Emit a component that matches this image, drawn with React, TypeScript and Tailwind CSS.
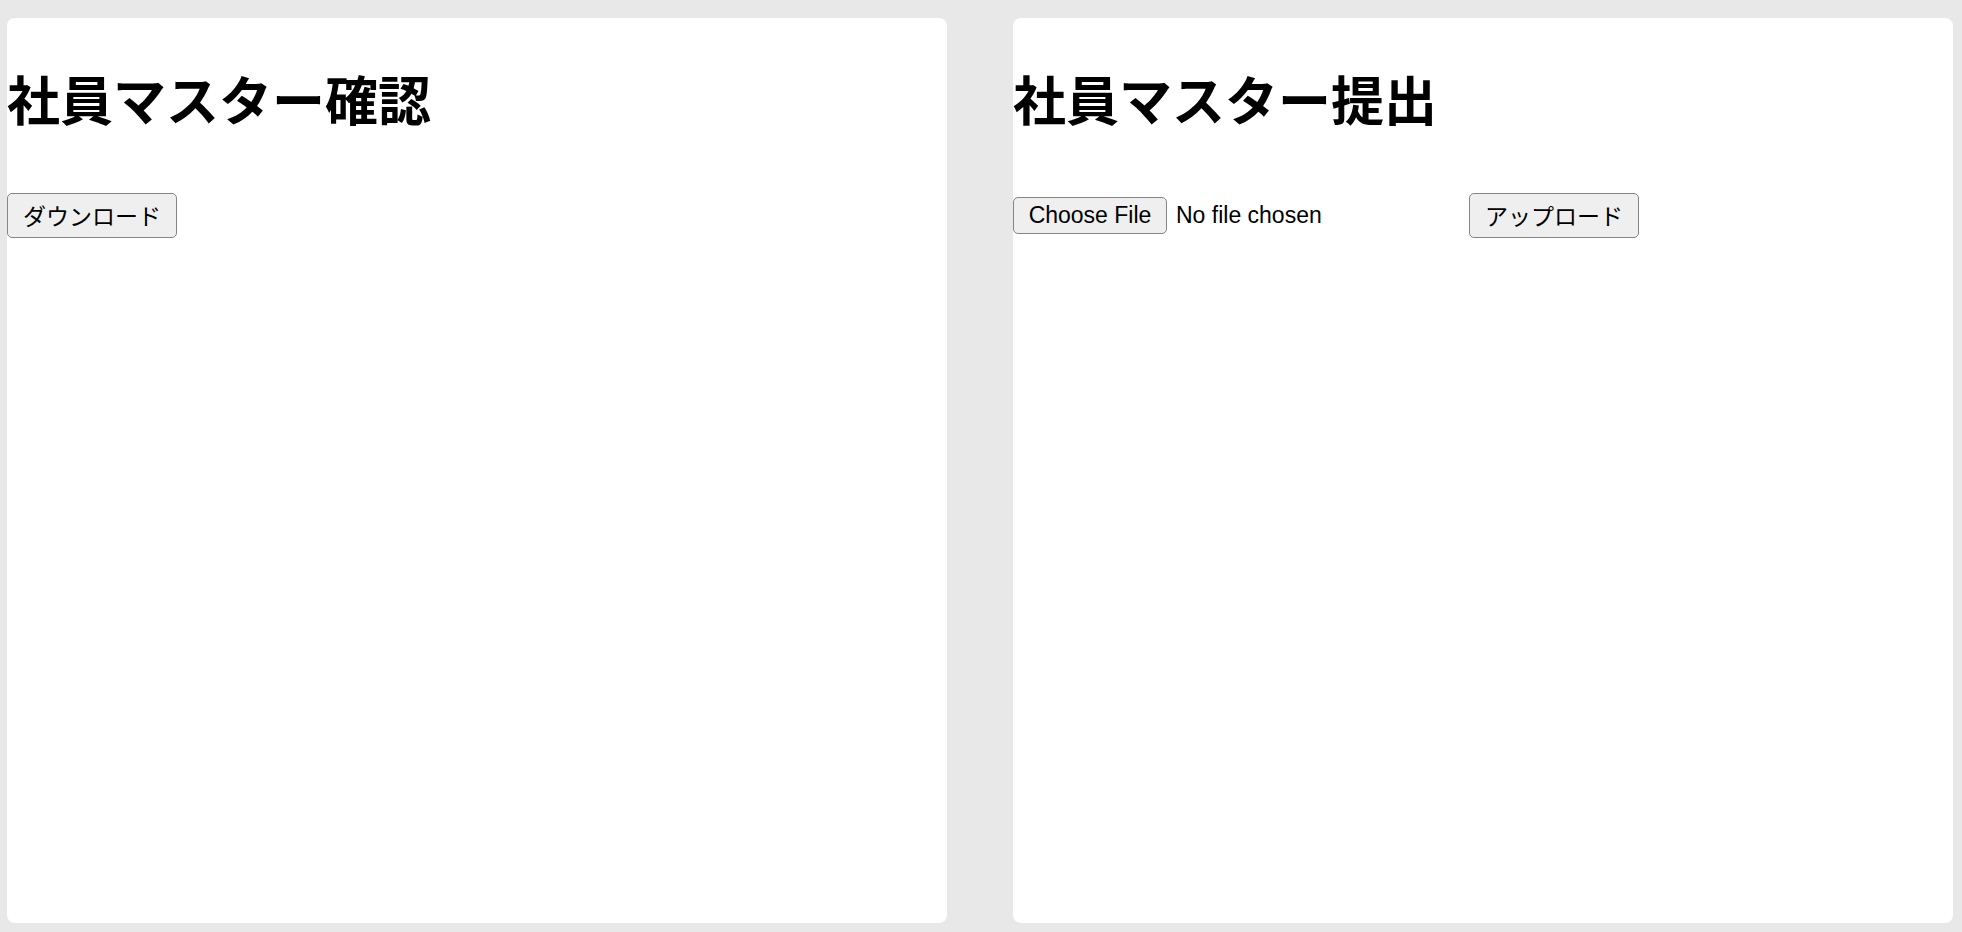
import React from 'react';

const jp = { fontFamily: '"Noto Sans CJK JP", "Noto Sans", sans-serif' };
const latin = { fontFamily: '"Liberation Sans", Arial, sans-serif' };

function NativeButton({ label }: { label: string }) {
  return (
    <button
      style={jp}
      className="h-[45px] px-[15px] bg-[#efefef] border-[1.5px] border-[#858585] rounded-[5px] text-[23px] leading-none text-black"
    >
      {label}
    </button>
  );
}

export default function App() {
  return (
    <div className="min-h-[932px] h-[932px] bg-[#e8e8e8] pl-[7px] pr-[9px] pt-[18px] pb-[9px] grid grid-cols-[940px_940px] gap-[66px]">
      {/* 確認 */}
      <section className="bg-white rounded-[8px] h-full">
        <h1 style={jp} className="mt-[54px] text-[53px] font-bold leading-none text-black">
          社員マスター確認
        </h1>
        <div className="mt-[68px] flex items-center">
          <NativeButton label="ダウンロード" />
        </div>
      </section>

      {/* 提出 */}
      <section className="bg-white rounded-[8px] h-full">
        <h1 style={jp} className="mt-[54px] text-[53px] font-bold leading-none text-black">
          社員マスター提出
        </h1>
        <div className="mt-[68px] flex items-center">
          <div className="w-[456px] flex items-center">
            <button
              style={latin}
              className="h-[37px] w-[154px] bg-[#efefef] border-[1.5px] border-[#858585] rounded-[5px] text-[23px] leading-none text-black"
            >
              Choose File
            </button>
            <span style={latin} className="ml-[9px] text-[23px] leading-none text-black">
              No file chosen
            </span>
          </div>
          <NativeButton label="アップロード" />
        </div>
      </section>
    </div>
  );
}
